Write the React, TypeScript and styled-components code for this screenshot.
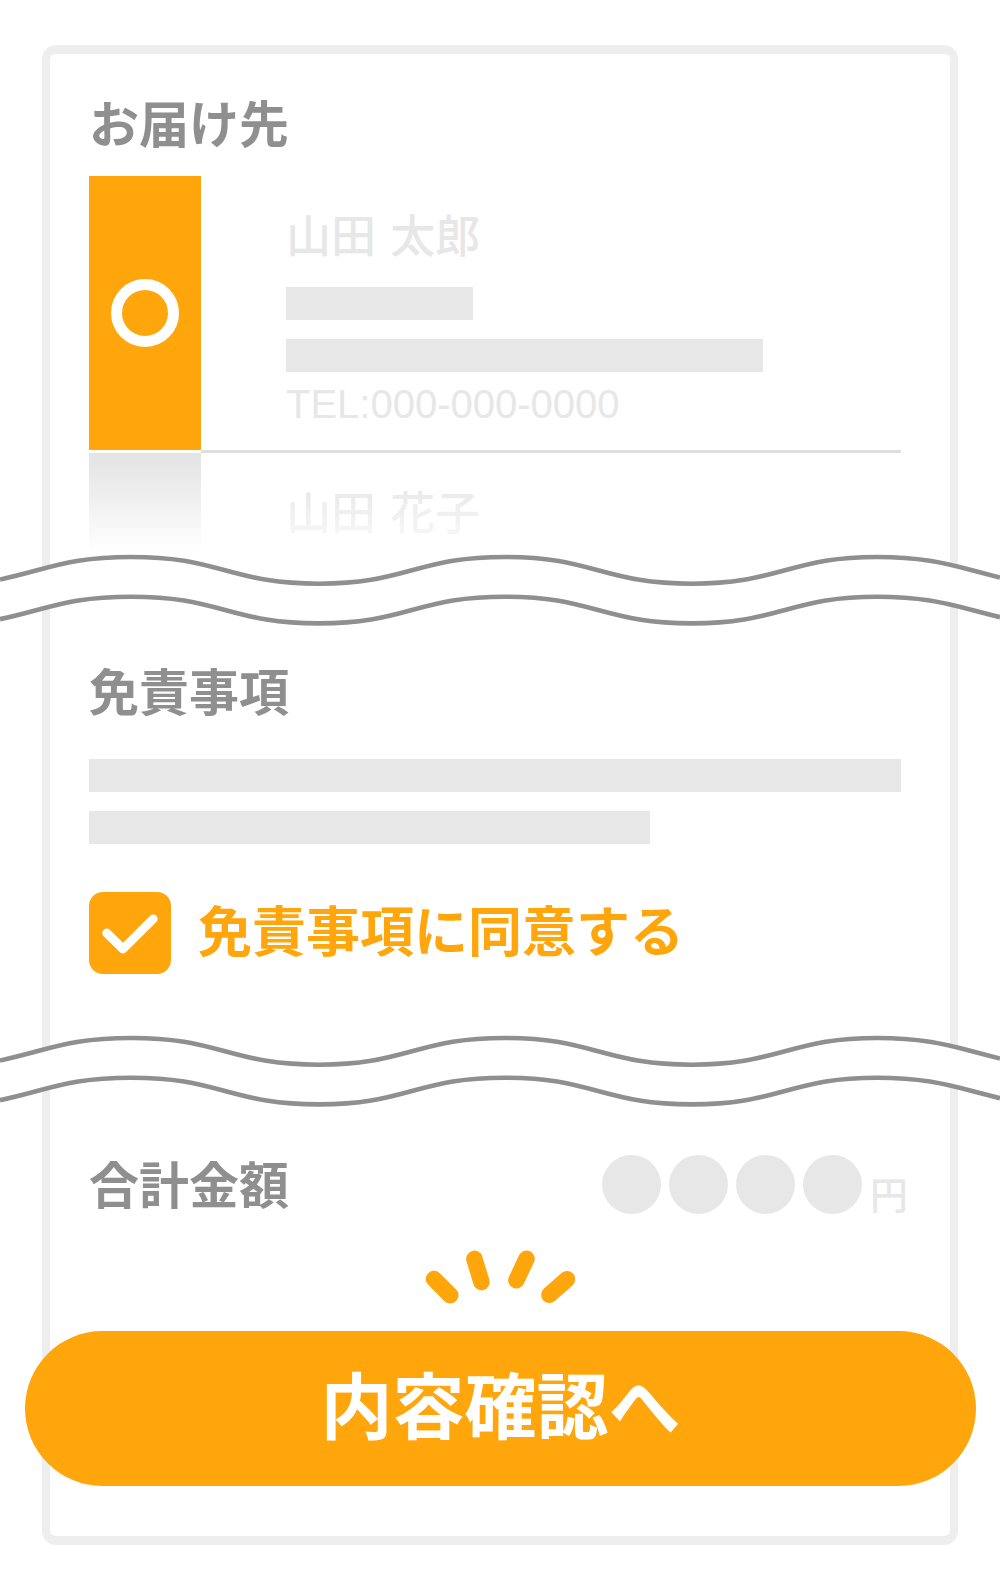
import React, { useState } from "react";
import styled, { createGlobalStyle } from "styled-components";

const ORANGE = "#ffa60d";
const GRAY = "#8f8f8f";
const PALE = "#e7e7e7";
const FRAME = "#eeeeee";

const GlobalStyle = createGlobalStyle`
  *, *::before, *::after { box-sizing: border-box; }
  body {
    margin: 0;
    background: #fff;
    font-family: "Liberation Sans", "Noto Sans CJK JP", sans-serif;
  }
`;

const Page = styled.main`
  padding: 45px 42px 43px;
  overflow-x: hidden;
`;

const Card = styled.form`
  border: solid ${FRAME};
  border-width: 9px 8px;
  border-radius: 14px;
  padding-bottom: 50px;
`;

const Section = styled.section<{ $top: number; $bottom?: number }>`
  padding: ${(p) => p.$top}px 49px ${(p) => p.$bottom ?? 0}px 39px;
`;

const Heading = styled.h2`
  margin: 0;
  padding-top: 6px;
  font-size: 50px;
  line-height: 54px;
  font-weight: 700;
  color: ${GRAY};
`;

const AddressList = styled.div`
  margin-top: 23px;
`;

const AddressRow = styled.label`
  display: grid;
  grid-template-columns: 112px 1fr;
`;

const RadioCell = styled.span<{ $active?: boolean }>`
  display: grid;
  place-items: center;
  margin-bottom: ${(p) => (p.$active ? 3 : 0)}px;
  background: ${(p) =>
    p.$active ? ORANGE : "linear-gradient(#e4e4e4, #e8e8e8 20%, #ffffff)"};
`;

const Radio = styled.input`
  appearance: none;
  margin: 0;
  width: 68px;
  height: 68px;
  border: 11px solid #fff;
  border-radius: 50%;
`;

const HiddenRadio = styled(Radio)`
  opacity: 0;
`;

const AddressBody = styled.span<{ $divider?: boolean }>`
  display: flex;
  flex-direction: column;
  padding: 35px 0 ${(p) => (p.$divider ? 22 : 10)}px 85px;
  border-bottom: ${(p) => (p.$divider ? "3px solid #dedede" : "none")};
`;

const Name = styled.span<{ $faded?: boolean }>`
  align-self: flex-start;
  font-family: "DejaVu Sans", "Noto Sans CJK JP", sans-serif;
  font-size: 45px;
  line-height: 54px;
  font-weight: 500;
  color: ${(p) => (p.$faded ? "transparent" : PALE)};
  background: ${(p) =>
    p.$faded ? "linear-gradient(#e9e9e9, #f8f8f8)" : "none"};
  background-clip: ${(p) => (p.$faded ? "text" : "border-box")};
`;

const Phone = styled.span`
  margin-top: 8px;
  font-size: 40px;
  line-height: 48px;
  color: ${PALE};
`;

const Bars = styled.span<{ $top: number }>`
  display: flex;
  flex-direction: column;
  gap: 19px;
  margin-top: ${(p) => p.$top}px;
`;

const Bar = styled.span<{ $max?: number }>`
  width: 100%;
  max-width: ${(p) => (p.$max ? `${p.$max}px` : "none")};
  height: 33px;
  background: ${PALE};
`;

const WaveSvg = styled.svg`
  display: block;
  width: calc(100% + 100px);
  height: 76px;
  margin: 0 -50px;
`;

const Agree = styled.label`
  display: flex;
  align-items: center;
  gap: 27px;
  margin-top: 48px;
  font-size: 54px;
  line-height: 60px;
  font-weight: 700;
  color: ${ORANGE};
`;

const CheckWrap = styled.span`
  display: grid;
  flex: none;
  width: 82px;
  height: 82px;

  > * {
    grid-area: 1 / 1;
  }
`;

const Checkbox = styled.input`
  appearance: none;
  margin: 0;
  border-radius: 14px;
  background: ${ORANGE};
`;

const Tick = styled.svg`
  z-index: 1;
  pointer-events: none;
`;

const TotalRow = styled.section`
  display: flex;
  align-items: center;
  justify-content: space-between;
  padding: 45px 42px 0 39px;
`;

const Amount = styled.div`
  display: flex;
  align-items: flex-end;
  gap: 8px;
`;

const Dot = styled.span`
  width: 59px;
  height: 59px;
  border-radius: 50%;
  background: ${PALE};
`;

const Yen = styled.span`
  font-size: 38px;
  line-height: 36px;
  font-weight: 500;
  color: ${PALE};
`;

const Rays = styled.svg`
  display: block;
  width: 150px;
  height: 54px;
  margin: 36px auto 27px;
`;

const Submit = styled.button`
  display: block;
  width: calc(100% + 51px);
  margin: 0 -25px;
  padding: 32px 0 33px;
  border: 0;
  border-radius: 78px;
  background: ${ORANGE};
  color: #fff;
  font-family: inherit;
  font-size: 72px;
  line-height: 90px;
  font-weight: 700;
`;

const LINE =
  "M0 27.5 C14 24.5 23 22.1 37 18.3 C65 10.7 88 5 131 5 C175 5 197 10.7 225 18.3 C253 25.9 276 31.7 319 31.7 C362 31.7 384 25.9 412 18.3 C440 10.7 462 5 505 5 C548 5 570 10.7 598 18.3 C626 25.9 649 31.7 692 31.7 C735 31.7 757 25.9 785 18.3 C813 10.7 835 5 877 5 C919 5 944 10.7 972 18.3 L1000 25.5";

function Wave() {
  return (
    <WaveSvg viewBox="0 0 1000 76" preserveAspectRatio="none" aria-hidden="true">
      <path d={`${LINE} V46 H0 Z`} fill="#fff" />
      <path
        d="M0 40 V67.5 C14 64.5 23 62.1 37 58.3 C65 50.7 88 45 131 45 V40 Z M869 40 V45 H877 C919 45 944 50.7 972 58.3 L1000 65.5 V40 Z"
        fill="#fff"
      />
      <g fill="none" stroke={GRAY} strokeWidth="4.6">
        <path d={LINE} />
        <path d={LINE} transform="translate(0 39.7)" />
      </g>
    </WaveSvg>
  );
}

export default function App() {
  const [agreed, setAgreed] = useState(true);

  return (
    <>
      <GlobalStyle />
      <Page>
        <Card onSubmit={(e: React.FormEvent) => e.preventDefault()}>
          <Section $top={39}>
            <Heading>お届け先</Heading>
            <AddressList>
              <AddressRow>
                <RadioCell $active>
                  <Radio type="radio" name="address" defaultChecked />
                </RadioCell>
                <AddressBody $divider>
                  <Name>山田 太郎</Name>
                  <Bars $top={22}>
                    <Bar $max={187} />
                    <Bar $max={477} />
                  </Bars>
                  <Phone>TEL:000-000-0000</Phone>
                </AddressBody>
              </AddressRow>
              <AddressRow>
                <RadioCell>
                  <HiddenRadio type="radio" name="address" />
                </RadioCell>
                <AddressBody>
                  <Name $faded>山田 花子</Name>
                </AddressBody>
              </AddressRow>
            </AddressList>
          </Section>

          <Wave />

          <Section $top={33} $bottom={59}>
            <Heading>免責事項</Heading>
            <Bars $top={38}>
              <Bar />
              <Bar $max={561} />
            </Bars>
            <Agree>
              <CheckWrap>
                <Checkbox
                  type="checkbox"
                  checked={agreed}
                  onChange={(e) => setAgreed(e.target.checked)}
                />
                {agreed && (
                  <Tick viewBox="0 0 82 82" aria-hidden="true">
                    <path
                      d="M17.7 41 L34 57 L64.2 26.8"
                      fill="none"
                      stroke="#fff"
                      strokeWidth="8.8"
                      strokeLinecap="round"
                      strokeLinejoin="round"
                    />
                  </Tick>
                )}
              </CheckWrap>
              免責事項に同意する
            </Agree>
          </Section>

          <Wave />

          <TotalRow>
            <Heading>合計金額</Heading>
            <Amount>
              <Dot />
              <Dot />
              <Dot />
              <Dot />
              <Yen>円</Yen>
            </Amount>
          </TotalRow>

          <Rays viewBox="0 0 150 54" aria-hidden="true">
            <g stroke={ORANGE} strokeWidth="16.5" strokeLinecap="round">
              <path d="M9 29 L25.4 45.3" />
              <path d="M49.4 8.8 L56.4 32" />
              <path d="M101.5 8.8 L91.4 30.3" />
              <path d="M142 29.3 L124.4 44.7" />
            </g>
          </Rays>

          <Submit type="submit">内容確認へ</Submit>
        </Card>
      </Page>
    </>
  );
}
